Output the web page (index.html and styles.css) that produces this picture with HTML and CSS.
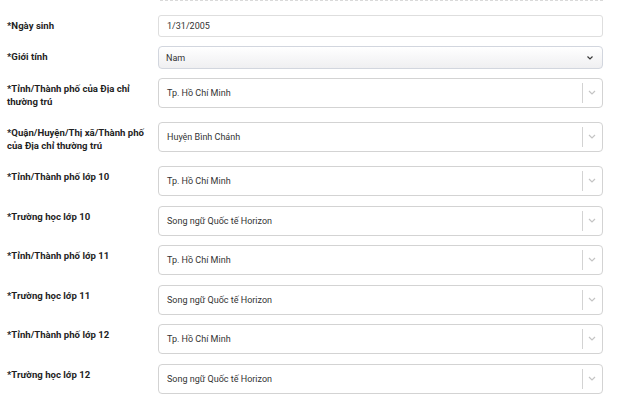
FILE: index.html
```html
<!DOCTYPE html>
<html lang="vi">
<head>
    <meta charset="UTF-8">
    <meta name="viewport" content="width=device-width, initial-scale=1.0">
    <title>Thông tin cá nhân</title>
    <link rel="stylesheet" href="styles.css">
</head>
<body>
    <div class="form">
        <div class="divider"></div>

        <div class="row short">
            <label class="label">*Ngày sinh</label>
            <div class="field">
                <input class="text-input" type="text" value="1/31/2005">
            </div>
        </div>

        <div class="row short">
            <label class="label">*Giới tính</label>
            <div class="field native-select">
                <select class="select-input">
                    <option>Nam</option>
                    <option>Nữ</option>
                </select>
                <svg class="native-arrow" width="8" height="6" viewBox="0 0 8 6"><path d="M1.5 1.5l2.5 2.5 2.5-2.5" fill="none" stroke="#3a3a3a" stroke-width="1.2"/></svg>
            </div>
        </div>

        <div class="row two-line">
            <label class="label">*Tỉnh/Thành phố của Địa chỉ thường trú</label>
            <div class="field">
                <div class="combo">
                    <span class="combo-value">Tp. Hồ Chí Minh</span>
                    <span class="combo-sep"></span>
                    <svg class="combo-arrow" width="10" height="6" viewBox="0 0 10 6"><path d="M2 1l3 3 3-3" fill="none" stroke="#c4c4c4" stroke-width="1.2"/></svg>
                </div>
            </div>
        </div>

        <div class="row two-line">
            <label class="label">*Quận/Huyện/Thị xã/Thành phố của Địa chỉ thường trú</label>
            <div class="field">
                <div class="combo">
                    <span class="combo-value">Huyện Bình Chánh</span>
                    <span class="combo-sep"></span>
                    <svg class="combo-arrow" width="10" height="6" viewBox="0 0 10 6"><path d="M2 1l3 3 3-3" fill="none" stroke="#c4c4c4" stroke-width="1.2"/></svg>
                </div>
            </div>
        </div>

        <div class="row">
            <label class="label">*Tỉnh/Thành phố lớp 10</label>
            <div class="field">
                <div class="combo">
                    <span class="combo-value">Tp. Hồ Chí Minh</span>
                    <span class="combo-sep"></span>
                    <svg class="combo-arrow" width="10" height="6" viewBox="0 0 10 6"><path d="M2 1l3 3 3-3" fill="none" stroke="#c4c4c4" stroke-width="1.2"/></svg>
                </div>
            </div>
        </div>

        <div class="row">
            <label class="label">*Trường học lớp 10</label>
            <div class="field">
                <div class="combo">
                    <span class="combo-value">Song ngữ Quốc tế Horizon</span>
                    <span class="combo-sep"></span>
                    <svg class="combo-arrow" width="10" height="6" viewBox="0 0 10 6"><path d="M2 1l3 3 3-3" fill="none" stroke="#c4c4c4" stroke-width="1.2"/></svg>
                </div>
            </div>
        </div>

        <div class="row">
            <label class="label">*Tỉnh/Thành phố lớp 11</label>
            <div class="field">
                <div class="combo">
                    <span class="combo-value">Tp. Hồ Chí Minh</span>
                    <span class="combo-sep"></span>
                    <svg class="combo-arrow" width="10" height="6" viewBox="0 0 10 6"><path d="M2 1l3 3 3-3" fill="none" stroke="#c4c4c4" stroke-width="1.2"/></svg>
                </div>
            </div>
        </div>

        <div class="row">
            <label class="label">*Trường học lớp 11</label>
            <div class="field">
                <div class="combo">
                    <span class="combo-value">Song ngữ Quốc tế Horizon</span>
                    <span class="combo-sep"></span>
                    <svg class="combo-arrow" width="10" height="6" viewBox="0 0 10 6"><path d="M2 1l3 3 3-3" fill="none" stroke="#c4c4c4" stroke-width="1.2"/></svg>
                </div>
            </div>
        </div>

        <div class="row">
            <label class="label">*Tỉnh/Thành phố lớp 12</label>
            <div class="field">
                <div class="combo">
                    <span class="combo-value">Tp. Hồ Chí Minh</span>
                    <span class="combo-sep"></span>
                    <svg class="combo-arrow" width="10" height="6" viewBox="0 0 10 6"><path d="M2 1l3 3 3-3" fill="none" stroke="#c4c4c4" stroke-width="1.2"/></svg>
                </div>
            </div>
        </div>

        <div class="row">
            <label class="label">*Trường học lớp 12</label>
            <div class="field">
                <div class="combo">
                    <span class="combo-value">Song ngữ Quốc tế Horizon</span>
                    <span class="combo-sep"></span>
                    <svg class="combo-arrow" width="10" height="6" viewBox="0 0 10 6"><path d="M2 1l3 3 3-3" fill="none" stroke="#c4c4c4" stroke-width="1.2"/></svg>
                </div>
            </div>
        </div>
    </div>
</body>
</html>
```

FILE: styles.css
```css
:root {
    --text-color: #1f1f1f;
    --input-text: #333333;
    --border-light: #dedede;
    --border-combo: #d3d3d3;
    --radius: 4px;
}

* {
    margin: 0;
    padding: 0;
    box-sizing: border-box;
}

body {
    font-family: Roboto, 'Noto Sans', sans-serif;
    color: var(--text-color);
    background-color: #ffffff;
    overflow: hidden;
}

.form {
    padding: 0 17px 0 7px;
}

.divider {
    margin-left: 153px;
    border-top: 1px dashed #d9d9d9;
    margin-bottom: 14px;
}

.row {
    display: flex;
    align-items: flex-start;
    margin-bottom: 9.6px;
}

.row.short {
    margin-bottom: 9px;
}

.row.two-line {
    margin-bottom: 14px;
}

.label {
    width: 151px;
    flex-shrink: 0;
    padding: 4px 10px 0 0;
    font-size: 9.6px;
    font-weight: 700;
    line-height: 13px;
}

.field {
    flex: 1;
    min-width: 0;
}

.text-input {
    display: block;
    width: 100%;
    height: 22px;
    padding: 0 8px;
    border: 1px solid var(--border-light);
    border-radius: 3px;
    font-family: inherit;
    font-size: 9px;
    color: var(--input-text);
    background-color: #ffffff;
    outline: none;
}

.native-select {
    position: relative;
}

.select-input {
    display: block;
    width: 100%;
    height: 23px;
    padding: 0 7px;
    border: 1px solid #d2d6de;
    border-radius: 4px;
    font-family: inherit;
    font-size: 9px;
    color: var(--input-text);
    background: linear-gradient(#ffffff, #efeff1);
    appearance: none;
    -webkit-appearance: none;
    outline: none;
}

.native-arrow {
    position: absolute;
    right: 9px;
    top: 9px;
    pointer-events: none;
}

.combo {
    display: flex;
    align-items: center;
    height: 30px;
    border: 1px solid var(--border-combo);
    border-radius: var(--radius);
    background-color: #ffffff;
}

.combo-value {
    flex: 1;
    padding-left: 8px;
    font-size: 9px;
    color: var(--input-text);
    white-space: nowrap;
    overflow: hidden;
}

.combo-sep {
    width: 1px;
    height: 20px;
    background-color: var(--border-combo);
}

.combo-arrow {
    margin: 0 5px 0 4px;
}
```
